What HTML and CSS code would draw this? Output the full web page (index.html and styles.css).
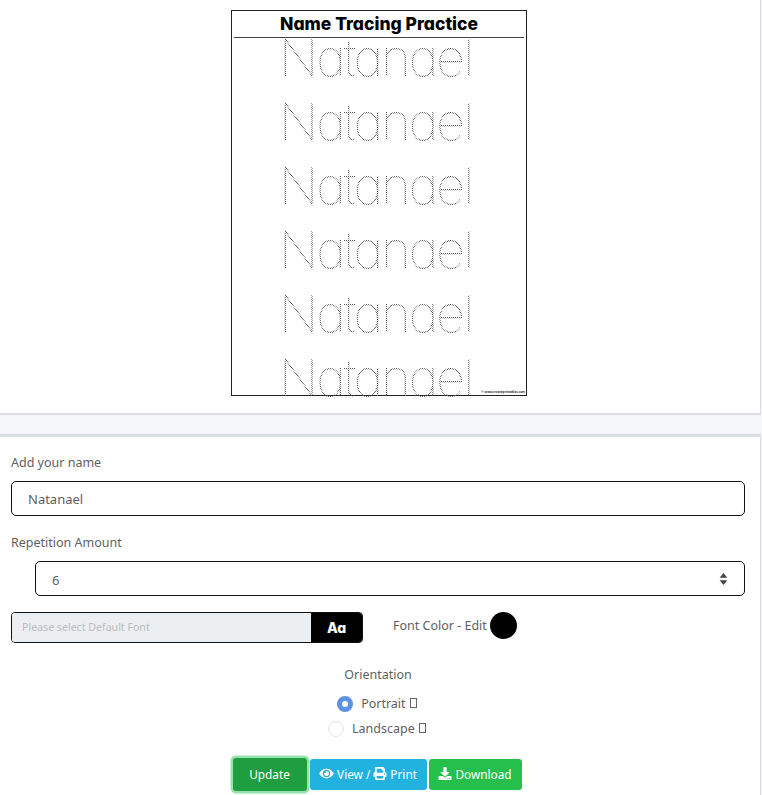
FILE: index.html
```html
<!DOCTYPE html>
<html lang="en">
<head>
    <meta charset="UTF-8">
    <meta name="viewport" content="width=device-width, initial-scale=1.0">
    <title>Name Tracing Practice</title>
    <link rel="stylesheet" href="styles.css">
</head>
<body>
    <div class="card preview-card">
        <div class="sheet">
            <h2 class="sheet-title">Name Tracing Practice</h2>
            <div class="trace-lines">
                <div class="trace">Natanael</div>
                <div class="trace">Natanael</div>
                <div class="trace">Natanael</div>
                <div class="trace">Natanael</div>
                <div class="trace">Natanael</div>
                <div class="trace">Natanael</div>
            </div>
            <span class="sheet-credit">© www.createprintables.com</span>
        </div>
    </div>

    <div class="card form-card">
        <div class="form-group">
            <label for="name">Add your name</label>
            <input class="form-control name-input" type="text" id="name" value="Natanael">
        </div>

        <div class="form-group">
            <label for="repeat">Repetition Amount</label>
            <div class="select-wrap">
                <div class="form-control select" id="repeat">
                    6
                    <svg class="select-arrows" viewBox="0 0 10 14"><path d="M5 0l4.500 5.500h-9zM5 14l-4.500-5.500h9z"/></svg>
                </div>
            </div>
        </div>

        <div class="font-row">
            <div class="font-picker">
                <div class="font-input">Please select Default Font</div>
                <div class="font-btn">Aa</div>
            </div>
            <div class="color-picker">
                <span>Font Color - Edit</span>
                <span class="color-dot"></span>
            </div>
        </div>

        <div class="orientation">
            <div class="orientation-title">Orientation</div>
            <div class="radio-row">
                <span class="radio checked"></span>
                <span>Portrait <i class="tofu"></i></span>
            </div>
            <div class="radio-row">
                <span class="radio"></span>
                <span>Landscape <i class="tofu"></i></span>
            </div>
        </div>

        <div class="actions">
            <button class="btn btn-update">Update</button>
            <button class="btn btn-view">
                <svg class="icon icon-eye" viewBox="0 0 576 512"><path d="M572.52 241.4C518.29 135.59 410.93 64 288 64S57.68 135.64 3.48 241.41a32.35 32.35 0 0 0 0 29.19C57.71 376.41 165.07 448 288 448s230.32-71.64 284.52-177.41a32.35 32.35 0 0 0 0-29.19zM288 400a144 144 0 1 1 144-144 143.93 143.93 0 0 1-144 144zm0-240a95.31 95.31 0 0 0-25.31 3.79 47.85 47.85 0 0 1-66.9 66.9A95.78 95.78 0 1 0 288 160z"/></svg>
                View /
                <svg class="icon" viewBox="0 0 512 512"><path d="M448 192V77.25c0-8.49-3.37-16.62-9.37-22.63L393.37 9.37c-6-6-14.14-9.37-22.63-9.37H96C78.33 0 64 14.33 64 32v160c-35.35 0-64 28.65-64 64v112c0 8.84 7.16 16 16 16h48v96c0 17.67 14.33 32 32 32h320c17.67 0 32-14.33 32-32v-96h48c8.84 0 16-7.16 16-16V256c0-35.35-28.65-64-64-64zm-64 256H128v-96h256v96zm0-224H128V64h192v48c0 8.84 7.16 16 16 16h48v96zm48 72c-13.25 0-24-10.75-24-24 0-13.26 10.75-24 24-24s24 10.74 24 24c0 13.25-10.75 24-24 24z"/></svg>
                Print
            </button>
            <button class="btn btn-download">
                <svg class="icon" viewBox="0 0 512 512"><path d="M216 0h80c13.300 0 24 10.700 24 24v168h87.700c17.800 0 26.700 21.500 14.100 34.100L269.700 378.300c-7.500 7.500-19.800 7.500-27.300 0L90.100 226.100c-12.600-12.600-3.700-34.100 14.100-34.100H192V24c0-13.300 10.700-24 24-24zm296 376v112c0 13.300-10.700 24-24 24H24c-13.300 0-24-10.700-24-24V376c0-13.300 10.700-24 24-24h146.700l49 49c20.100 20.100 52.500 20.100 72.600 0l49-49H488c13.300 0 24 10.700 24 24zm-124 88c0-11-9-20-20-20s-20 9-20 20 9 20 20 20 20-9 20-20zm64 0c0-11-9-20-20-20s-20 9-20 20 9 20 20 20 20-9 20-20z"/></svg>
                Download
            </button>
        </div>
    </div>
</body>
</html>
```

FILE: styles.css
```css
:root {
    --text-color: #5f5f5f;
    --border-color: #dddddf;
    --page-bg: #f4f6f9;
}
* {
    margin: 0;
    padding: 0;
    box-sizing: border-box;
}
html, body {
    height: 795px;
    overflow: hidden;
}
body {
    font-family: "Noto Sans", "Open Sans", sans-serif;
    font-size: 12.500px;
    background-color: var(--page-bg);
    color: var(--text-color);
}
.card {
    width: 761px;
    background-color: #fff;
    border-right: 1px solid var(--border-color);
}
.preview-card {
    height: 415px;
    padding-top: 10px;
    border-bottom: 2px solid var(--border-color);
}
.sheet {
    position: relative;
    width: 296px;
    height: 386px;
    margin-left: 231px;
    border: 1px solid #222;
    color: #000;
}
.sheet-title {
    margin: 0 2px;
    height: 27px;
    border-bottom: 1px solid #444;
    font-family: Inter, Lato, sans-serif;
    font-feature-settings: "cv11";
    font-size: 17.500px;
    font-weight: 800;
    line-height: 26px;
    text-align: center;
}
.trace-lines {
    display: flex;
    flex-direction: column;
    align-items: center;
    gap: 20px;
    margin-top: -2px;
    padding-right: 7px;
}
.trace {
    height: 44px;
    font-family: Inter, Lato, sans-serif;
    font-feature-settings: "cv11";
    font-size: 51px;
    font-weight: 100;
    line-height: 44px;
    letter-spacing: -2.150px;
    color: transparent;
    background-image: conic-gradient(#555 25%, transparent 0 50%, #555 0 75%, transparent 0);
    background-size: 2px 2px;
    -webkit-background-clip: text;
    background-clip: text;
}
.sheet-credit {
    position: absolute;
    right: 1px;
    bottom: 1px;
    font-size: 3px;
    font-weight: 700;
    color: #333;
    background-color: #fff;
}
.form-card {
    height: 361px;
    margin-top: 19px;
    padding: 17px 15px 0 11px;
    border-top: 3px solid #d8e0e2;
}
.form-group {
    margin-bottom: 18px;
}
.form-group label {
    display: block;
    margin-bottom: 9px;
    line-height: 18px;
}
.form-control {
    display: block;
    width: 100%;
    height: 35px;
    padding: 0 16px;
    border: 1.5px solid #111;
    border-radius: 5px;
    background-color: #fff;
    color: var(--text-color);
    font: inherit;
    font-size: 13px;
    line-height: 35px;
}
.name-input {
    padding-top: 2px;
}
.select-wrap {
    padding-left: 24px;
}
.select {
    position: relative;
    padding-top: 1px;
}
.select-arrows {
    position: absolute;
    top: 11px;
    right: 16px;
    width: 9px;
    height: 12px;
    fill: #444;
}
.font-row {
    display: flex;
    margin-top: -2px;
}
.font-picker {
    display: flex;
    width: 352px;
    height: 31px;
    border: 1px solid #111;
    border-radius: 4px;
    overflow: hidden;
}
.font-input {
    flex: 1;
    padding-left: 10px;
    background-color: #eceff1;
    color: #b9bcc4;
    font-size: 10.600px;
    line-height: 29px;
}
.font-btn {
    width: 51px;
    background-color: #000;
    color: #fff;
    font-family: Inter, sans-serif;
    font-feature-settings: "cv11";
    font-size: 14px;
    font-weight: 800;
    line-height: 29px;
    text-align: center;
}
.color-picker {
    display: flex;
    align-items: center;
    gap: 3px;
    height: 27px;
    margin-left: 30px;
}
.color-dot {
    width: 27px;
    height: 27px;
    border-radius: 50%;
    background-color: #000;
}
.orientation {
    margin-top: 22px;
    text-align: center;
}
.orientation-title {
    line-height: 20px;
    margin-bottom: 6px;
}
.radio-row {
    display: flex;
    justify-content: center;
    align-items: center;
    gap: 8px;
    height: 25px;
    padding-right: 2px;
}
.radio {
    width: 16px;
    height: 16px;
    border: 1px solid #e2e4e6;
    border-radius: 50%;
    background-color: #fff;
}
.radio.checked {
    border: 5px solid #5b93e4;
}
.tofu {
    display: inline-block;
    width: 7px;
    height: 10px;
    margin-left: 1px;
    border: 1px solid #666;
}
.actions {
    display: flex;
    justify-content: center;
    align-items: center;
    gap: 2px;
    margin-top: 17px;
    padding-right: 2px;
}
.btn {
    display: flex;
    align-items: center;
    justify-content: center;
    gap: 3px;
    height: 31px;
    padding-bottom: 2px;
    border: none;
    border-radius: 3px;
    color: #fff;
    font: inherit;
    font-size: 11.800px;
}
.btn-update {
    width: 74px;
    height: 33px;
    margin-right: 1px;
    background-color: #1e9e3f;
    box-shadow: 0 0 0 2.500px #97e3ac;
}
.btn-view {
    width: 117px;
    background-color: #22b2e0;
}
.btn-download {
    width: 93px;
    background-color: #25bf4c;
}
.icon {
    width: 14px;
    height: 13px;
    fill: #fff;
}
.icon-eye {
    width: 15px;
}
```
